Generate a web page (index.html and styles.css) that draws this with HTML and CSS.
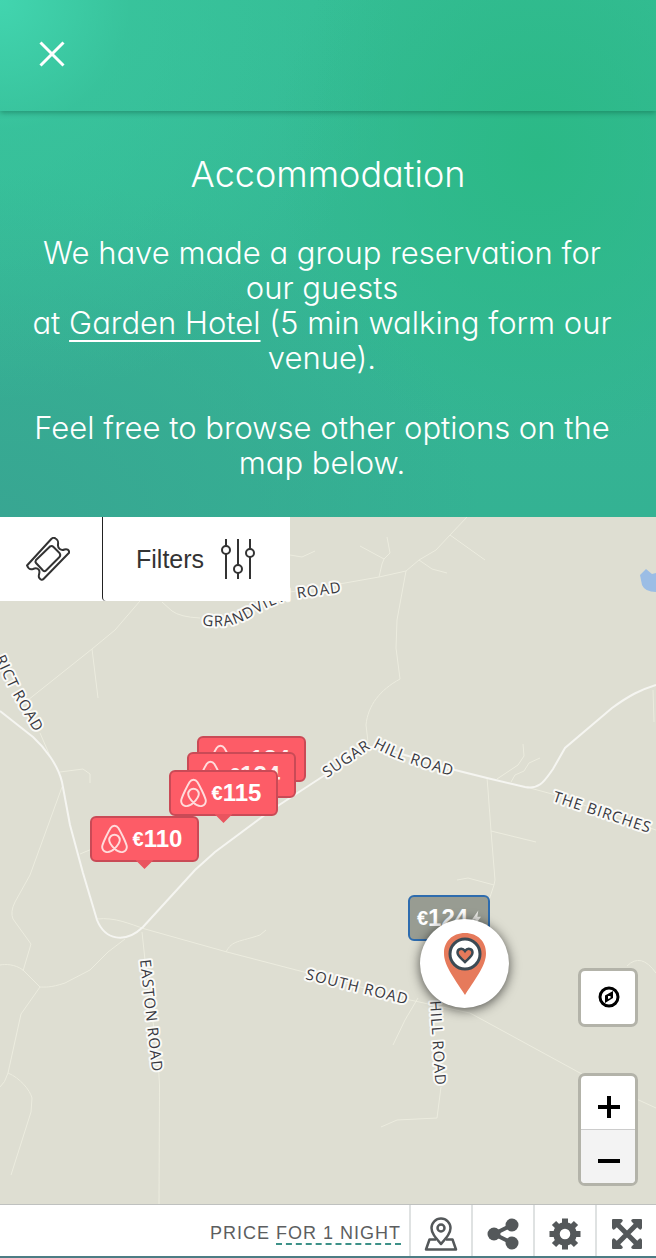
FILE: index.html
```html
<!DOCTYPE html>
<html lang="en">
<head>
<meta charset="utf-8">
<meta name="viewport" content="width=device-width, initial-scale=1">
<title>Accommodation</title>
<link rel="stylesheet" href="styles.css">
</head>
<body>
<div class="top">
  <header class="bar">
    <button class="close" aria-label="Close">
      <svg viewBox="0 0 26 26" width="26" height="26"><path d="M1.5 1.5 24.500 24.500M24.500 1.500 1.500 24.500" stroke="#fff" stroke-width="3" fill="none"/></svg>
    </button>
  </header>
  <main class="intro">
    <h1>Accommodation</h1>
    <p>We have made a group reservation for our guests<br>at <a href="#hotel">Garden Hotel</a> (5 min walking form our venue).</p>
    <p>Feel free to browse other options on the map below.</p>
  </main>
</div>

<section class="map" aria-label="Map">
  <svg class="canvas" viewBox="0 517 656 688" preserveAspectRatio="xMinYMin slice">
    <path class="lake" d="M646 569 640 575 642 585Q645 592 656 592V573L652 574Z"/>
    <g class="minor">
      <path d="M467 517 450 535 436 550 419 560 406 571 379 577 345 583 290 592M450 535 485 560M419 560 432 569 447 573M379 577 382 564 384 559 360 546M384 559 390 553 387 537"/>
      <path d="M406 571 397 620 396 648 400 679C380 690 368 705 366 725L368 742M487 778 488 790 491 831 495 880 494 885 489 900 470 960M491 831 536 842M457 880 468 878 494 885"/>
      <path d="M497 779 518 765 524 756 523 744M511 782 515 775 524 771 529 763 540 758M530 788 552 794 656 830M653 690 654 722"/>
      <path d="M140 601 115 630 92 649 28 700M92 649 98 698M40 733 50 756M60 772 83 769 90 774V783M62 787 30 875 15 902Q10 912 13 919L31 944 23 971M80 854 92 849"/>
      <path d="M97 919C115 917 130 924 145 929L227 952 300 971 410 1000 470 1013 580 1073 656 1108M226 952C232 940 240 942 260 935L266 930M125 939 108 952 90 970 65 983C50 988 45 987 40 987L23 970C15 964 5 964 0 965M40 987 21 1014 8 1073Q5 1083 0 1087M8 1073C20 1078 30 1090 32 1098L31 1112 11 1175"/>
      <path d="M142 932 145 960 158 1060 159.500 1085 159 1205M381 1127 397 1120 437 1118 441 1087M418 998 405 1020 393 1045M627 966Q641 952 656 973M162 602 172 611Q180 617 200 618M290 555 302 557 315 551"/>
    </g>
    <path class="major" d="M0 711 33 737C45 748 58 765 62 782L70 825 83 873 97 920C105 940 125 944 143 927L195 870 215 852 270 811 325 775 360 752Q370 744 385 749L455 770 487 778 525 787C540 790 545 780 553 769L565 748 612 708C630 695 640 690 656 685"/>
    <path id="r1" fill="none" d="M202 625C225 629 240 624 256 614S285 600 300 598L350 591"/>
    <path id="r2" fill="none" d="M-5 658 10 690 44 748"/>
    <path id="r3" fill="none" d="M327 778 380 742"/>
    <path id="r4" fill="none" d="M373 747Q405 765 465 779"/>
    <path id="r5" fill="none" d="M552 801 670 840"/>
    <path id="r6" fill="none" d="M305 979 425 1009"/>
    <path id="r7" fill="none" d="M140 960 154 1090"/>
    <path id="r8" fill="none" d="M430 1001 437 1110"/>
    <g class="roads">
      <text><textPath href="#r1">GRANDVIEW ROAD</textPath></text>
      <text><textPath href="#r2">RICT ROAD</textPath></text>
      <text><textPath href="#r3">SUGAR</textPath></text>
      <text><textPath href="#r4">HILL ROAD</textPath></text>
      <text><textPath href="#r5">THE BIRCHES</textPath></text>
      <text><textPath href="#r6">SOUTH ROAD</textPath></text>
      <text><textPath href="#r7">EASTON ROAD</textPath></text>
      <text><textPath href="#r8">HILL ROAD</textPath></text>
    </g>
  </svg>

  <svg width="0" height="0" class="defs"><symbol id="bnb" viewBox="0 0 28 30"><path d="M14 25C10 21 8.500 18 8.500 16a5.500 5.500 0 0 1 11 0c0 2-1.500 5-5.500 9-3 3-6 4-8.500 3.500-3-.7-5-3.500-4-7C2.500 18 7.500 7.500 10 3.500c2-3 6-3 8 0 2.500 4 7.500 14.500 8.500 18 1 3.500-1 6.300-4 7C20 29 17 28 14 25Z" fill="none" stroke="currentColor" stroke-width="2"/></symbol></svg>

  <div class="tools">
    <button class="ticket" aria-label="Tickets">
      <svg viewBox="0 0 44 44" width="44" height="44" fill="none" stroke="#333" stroke-width="2" stroke-linejoin="round"><path d="M25.500 1.800Q27.500 0 29.500 1.500C32 3 32.500 4 32 7.500c-.5 4 3 6.500 6.500 5 2.500-1 4.500.5 4.800 3L17.500 42c-1.500 1.500-3.500.5-4.500-1.500-1-3 1.500-4.500 0-7.500-1.500-2-4-2-6-1C4 33 2 31 1 28.500Z"/><path d="M24 9.500Q26 8.500 27.500 10L33.500 16Q35 18 33.500 20L20 33.500Q18.500 35 17 33.500L10 26Q9 24.500 10 23Z"/></svg>
    </button>
    <button class="filters">Filters
      <svg viewBox="0 0 36 42" width="36" height="42" fill="none" stroke="#333" stroke-width="2"><path d="M6 1V8M6 16V41M18 1V27M18 35V41M30 1V11M30 19V41"/><circle cx="6" cy="12" r="4"/><circle cx="18" cy="31" r="4"/><circle cx="30" cy="15" r="4"/></svg>
    </button>
  </div>

  <button class="tag t1"><svg><use href="#bnb"/></svg><span><small>€</small>124</span></button>
  <button class="tag t2"><svg><use href="#bnb"/></svg><span><small>€</small>124</span></button>
  <button class="tag t3"><svg><use href="#bnb"/></svg><span><small>€</small>115</span></button>
  <button class="tag t4"><svg><use href="#bnb"/></svg><span><small>€</small>110</span></button>
  <button class="tag hotel"><span><small>€</small>124</span><svg viewBox="0 0 10 18"><path d="M7 0 0 10H4L2 18 10 7H6Z" fill="#e8e8e4"/></svg></button>
  <button class="venue" aria-label="Venue">
    <svg viewBox="0 0 42 62" width="42" height="62"><path d="M21 0C8 0 0 9 0 20 0 32 8 42 21 62 34 42 42 32 42 20 42 9 34 0 21 0Z" fill="#e67a5b"/><circle cx="21" cy="21" r="15" fill="#fff" stroke="#3b4a54" stroke-width="3"/><path d="M21 29C17 25 13.500 23 13.500 19.500c0-4 5-5 7.500-1.500 2.500-3.500 7.500-2.500 7.500 1.500C28.500 23 25 25 21 29Z" fill="#e67a5b" stroke="#3b4a54" stroke-width="2.500"/></svg>
  </button>

  <div class="controls">
    <div class="box">
      <button aria-label="Compass"><svg viewBox="0 0 22 22" width="22" height="22"><circle cx="11" cy="11" r="9" fill="none" stroke="#000" stroke-width="3"/><path fill-rule="evenodd" d="M15 5V12L7 17V9.500ZM10 10V13L12.500 12V10Z"/></svg></button>
    </div>
    <div class="box zoom">
      <button aria-label="Zoom in"><svg viewBox="0 0 22 22" width="22" height="22"><path d="M0 11H22M11 0V22" stroke="#000" stroke-width="4"/></svg></button>
      <button class="out" aria-label="Zoom out"><svg viewBox="0 0 22 22" width="22" height="22"><path d="M0 11H22" stroke="#000" stroke-width="4"/></svg></button>
    </div>
  </div>
</section>

<footer class="foot">
  <p class="price">PRICE <button>FOR 1 NIGHT</button></p>
  <button class="cell" aria-label="Location"><svg viewBox="0 0 34 34" width="34" height="34" fill="none" stroke="#54585a" stroke-width="2.500" stroke-linejoin="round"><path d="M17 27C11 20 7.500 16 7.500 11a9.500 9.500 0 0 1 19 0C26.500 16 23 20 17 27Z"/><circle cx="17" cy="11" r="3.500"/><path d="M12 22.500H5.500L2 32.500H32L28.500 22.500H22"/></svg></button>
  <button class="cell" aria-label="Share"><svg viewBox="0 0 32 32" width="32" height="32" fill="#54585a"><path d="M25 7 7 16 25 25" fill="none" stroke="#54585a" stroke-width="4"/><circle cx="25" cy="7" r="6.500"/><circle cx="7" cy="16" r="6.500"/><circle cx="25" cy="25" r="6.500"/></svg></button>
  <button class="cell" aria-label="Settings"><svg viewBox="-16 -16 32 32" width="32" height="32" fill="none" stroke="#54585a"><circle r="8.500" stroke-width="6.500"/><path stroke-width="6" d="M0-10V-15.500M0 10V15.500M-10 0H-15.500M10 0H15.500M-7-7-11-11M7-7 11-11M-7 7-11 11M7 7 11 11"/></svg></button>
  <button class="cell" aria-label="Full screen"><svg viewBox="0 0 32 32" width="32" height="32" fill="#54585a"><path d="M5 5 27 27M27 5 5 27" stroke="#54585a" stroke-width="5"/><path d="M1 2Q1 1 2 1H10Q13 2 11 4L4 11Q2 13 1 10ZM31 2Q31 1 30 1H22Q19 2 21 4L28 11Q30 13 31 10ZM1 30Q1 31 2 31H10Q13 30 11 28L4 21Q2 19 1 22ZM31 30Q31 31 30 31H22Q19 30 21 28L28 21Q30 19 31 22Z"/></svg></button>
</footer>
</body>
</html>
```

FILE: styles.css
```css
* { box-sizing: border-box; }
body {
  margin: 0;
  min-height: 100vh;
  display: flex;
  flex-direction: column;
  font-family: "Liberation Sans", Arial, sans-serif;
}
button {
  margin: 0;
  padding: 0;
  border: 0;
  background: none;
  font: inherit;
  color: inherit;
  cursor: pointer;
}
svg { display: block; }

.top {
  color: #fff;
  font-family: Inter, "Open Sans", sans-serif;
  font-weight: 300;
  font-feature-settings: "cv11";
  background:
    radial-gradient(ellipse 260px 300px at 82% 30%, #2bb986, #2bb98600),
    radial-gradient(circle at 0 0, #42d5af 0, #3bc9a280 130px, #36c09a00 400px),
    radial-gradient(ellipse 480px 340px at 0 100%, #38a692, #38a69200),
    linear-gradient(180deg, #35bd95, #34b293);
}
.bar {
  height: 111px;
  display: flex;
  align-items: center;
  padding: 0 39px 3px;
  box-shadow: 0 2px 5px rgba(0, 60, 40, .35);
}
.intro {
  padding: 42px 24px 37px;
  text-align: center;
}
h1 {
  margin: 0 0 40px;
  font-size: 36px;
  line-height: 42px;
  font-weight: 300;
}
.intro p {
  margin: 0 12px 35px 0;
  font-size: 31px;
  line-height: 35px;
}
.intro p:last-child { margin-bottom: 0; }
.intro a {
  color: inherit;
  text-decoration: underline;
  text-decoration-thickness: 2px;
  text-underline-offset: 6px;
  text-decoration-skip-ink: none;
}

.map {
  position: relative;
  flex: 1 0 680px;
  overflow: hidden;
  background: #deded2;
}
.canvas {
  position: absolute;
  inset: 0;
  width: 100%;
  height: 100%;
}
.defs { position: absolute; }
.lake { fill: #9bbde5; }
.minor { fill: none; stroke: #ececdf; stroke-width: 1px; }
.major { fill: none; stroke: #f5f5f1; stroke-width: 2px; }
.roads {
  font-family: "Open Sans", "Noto Sans", sans-serif;
  font-size: 15px;
  font-weight: 500;
  letter-spacing: 1px;
  fill: #38383f;
  stroke: #fafaf7;
  stroke-width: 4px;
  stroke-linejoin: round;
  paint-order: stroke;
}

.tools {
  position: relative;
  width: max-content;
  display: flex;
  height: 84px;
  color: #333;
  background: #fff;
}
.ticket {
  width: 102px;
  padding-left: 26px;
}
.filters {
  display: flex;
  align-items: center;
  gap: 16px;
  padding: 0 34px 0 33px;
  border-left: 1px solid #222;
  border-bottom-left-radius: 4px;
  font-size: 25px;
}

.tag {
  position: absolute;
  display: flex;
  align-items: center;
  justify-content: center;
  gap: 5px;
  width: 109px;
  height: 46px;
  padding-right: 6px;
  border: 2px solid #c94a56;
  border-radius: 6px;
  background: #fd5c67;
  color: #fff;
  font-size: 24px;
  font-weight: bold;
}
.tag small { font-size: 20px; vertical-align: 1px; }
.tag > svg { width: 27px; height: 30px; color: #ffdcdc; }
.tag::after {
  content: "";
  position: absolute;
  top: 100%;
  left: 50%;
  width: 18px;
  height: 9px;
  margin-left: -9px;
  background: #e9545f;
  clip-path: polygon(0 0, 100% 0, 50% 100%);
}
.t1 { left: 197px; top: 219px; }
.t2 { left: 187px; top: 235px; }
.t3 { left: 169px; top: 253px; }
.t4 { left: 90px; top: 299px; }
.t1 span, .t2 span { opacity: .9; }
.hotel {
  left: 408px;
  top: 378px;
  width: 82px;
  padding-right: 0;
  gap: 4px;
  border-color: #2e6cae;
  background: #989c92;
}
.hotel > svg { width: 9px; height: 17px; }
.hotel::after { display: none; }
.venue {
  position: absolute;
  left: 420px;
  top: 402px;
  width: 89px;
  height: 89px;
  display: grid;
  place-items: center;
  border-radius: 50%;
  background: #fff;
  box-shadow: 0 2px 12px rgba(0, 0, 0, .65);
}

.controls {
  position: absolute;
  right: 18px;
  bottom: 18px;
  display: flex;
  flex-direction: column;
  gap: 46px;
}
.box {
  width: 60px;
  border: 3px solid #b3b3a9;
  border-radius: 7px;
  background: #fff;
  overflow: hidden;
}
.box button {
  width: 100%;
  height: 53px;
  padding: 0 0 2px 2px;
  display: grid;
  place-items: center;
}
.box.zoom button { padding: 8px 0 0 2px; }
.box button + button { border-top: 1px solid #ccc; }
.box .out { height: 54px; background: #f3f3f3; }

.foot {
  display: flex;
  height: 54px;
  border-top: 1px solid #bfc1bf;
  border-bottom: 2px solid #4c7c84;
  background: #fff;
}
.price {
  flex: 1;
  margin: 0;
  padding: 16px 8px 0;
  text-align: right;
  font-size: 18px;
  line-height: 24px;
  letter-spacing: 1px;
  color: #5c5e60;
}
.price button {
  line-height: 20px;
  letter-spacing: 1px;
  border-bottom: 2px dashed #3d9188;
}
.cell {
  flex: 0 0 62px;
  display: grid;
  place-items: center;
  padding-top: 6px;
  border-left: 2px solid #dfe2e2;
}
.cell:last-child { flex-basis: 61px; }
```
